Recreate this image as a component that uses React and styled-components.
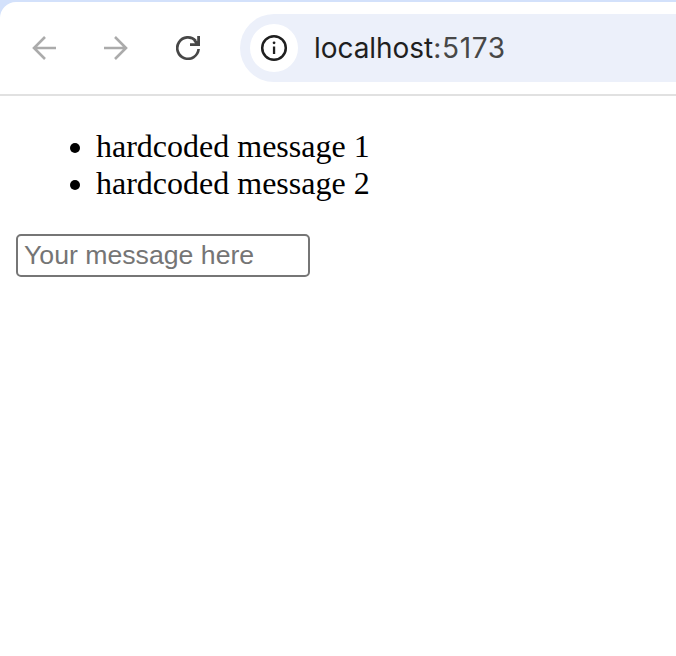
import React from 'react';
import styled, { createGlobalStyle } from 'styled-components';

const GlobalStyle = createGlobalStyle`
  * { box-sizing: border-box; }
  body { margin: 0; background: #fff; overflow: hidden; }
`;

const Window = styled.div`
  display: flex;
  flex-direction: column;
  height: 656px;
  padding-top: 2px;
  background: linear-gradient(#d3e1fb 0 40px, #fff 40px);
`;

const Toolbar = styled.header`
  display: flex;
  align-items: center;
  height: 94px;
  padding: 0 0 0 20px;
  background: #fff;
  border-bottom: 2px solid #e1e1e1;
  border-top-left-radius: 16px;
`;

const NavButton = styled.button`
  display: flex;
  align-items: center;
  justify-content: center;
  width: 48px;
  height: 48px;
  margin-right: 24px;
  padding: 0;
  border: 0;
  background: none;
  color: ${({ $muted }) => ($muted ? '#ababab' : '#474747')};
`;

const AddressBar = styled.div`
  display: flex;
  flex: 1;
  align-items: center;
  gap: 16px;
  height: 68px;
  margin-left: 4px;
  padding-left: 10px;
  border-radius: 34px 0 0 34px;
  background: #ecf0fa;
`;

const SiteInfo = styled.span`
  display: flex;
  align-items: center;
  justify-content: center;
  width: 48px;
  height: 48px;
  border-radius: 50%;
  background: #fff;
  color: #1f1f1f;
`;

const Url = styled.span`
  font: 400 28px/34px Inter, sans-serif;
  letter-spacing: -0.05px;
  color: #1f1f1f;
`;

const Port = styled.span`
  letter-spacing: 0.7px;
  color: #474747;
`;

const Page = styled.main`
  flex: 1;
  padding: 33px 16px 16px;
  background: #fff;
`;

const Messages = styled.ul`
  margin: 0 0 31px;
  padding: 0 0 0 54px;
  list-style: none;
`;

const Message = styled.li`
  display: flex;
  align-items: center;
  gap: 16px;
  height: 37px;
  font: 32px/35px 'Liberation Serif', serif;
  color: #000;

  &::before {
    content: '';
    width: 10px;
    height: 10px;
    border-radius: 50%;
    background: #000;
  }
`;

const MessageText = styled.span`
  height: 37px;
`;

const MessageInput = styled.input`
  display: block;
  width: 294px;
  height: 43px;
  padding: 3px 6px;
  border: 2px solid #767676;
  border-radius: 5px;
  outline: 0;
  background: #fff;
  font: 26.67px 'Liberation Sans', sans-serif;

  &::placeholder { color: #757575; opacity: 1; }
`;

const BackIcon = () => (
  <svg width="24" height="24" viewBox="0 0 24 24" fill="none" stroke="currentColor" strokeWidth="2.6">
    <path d="M24 12H2M13 1 2 12 13 23" />
  </svg>
);

const ForwardIcon = () => (
  <svg width="24" height="24" viewBox="0 0 24 24" fill="none" stroke="currentColor" strokeWidth="2.6">
    <path d="M0 12h22M11 1 22 12 11 23" />
  </svg>
);

const ReloadIcon = () => (
  <svg width="24" height="24" viewBox="0 0 24 24">
    <path d="M22.6 13A10.7 10.7 0 1 1 19.8 4.8" fill="none" stroke="currentColor" strokeWidth="2.7" />
    <path d="M24 0v10H14V7.2h5.2L17.5 5.4 19.4 3.5 21.2 5.2V0z" fill="currentColor" />
  </svg>
);

const InfoIcon = () => (
  <svg width="28" height="28" viewBox="0 0 28 28">
    <circle cx="14" cy="14" r="11.8" fill="none" stroke="currentColor" strokeWidth="2.5" />
    <path d="M12.9 12.5h2.3V20h-2.3z" fill="currentColor" />
    <circle cx="14.05" cy="8.8" r="1.4" fill="currentColor" />
  </svg>
);

const messages = ['hardcoded message 1', 'hardcoded message 2'];

export default function App() {
  return (
    <Window>
      <GlobalStyle />
      <Toolbar>
        <NavButton $muted aria-label="Back"><BackIcon /></NavButton>
        <NavButton $muted aria-label="Forward"><ForwardIcon /></NavButton>
        <NavButton aria-label="Reload"><ReloadIcon /></NavButton>
        <AddressBar>
          <SiteInfo><InfoIcon /></SiteInfo>
          <Url>localhost<Port>:5173</Port></Url>
        </AddressBar>
      </Toolbar>
      <Page>
        <Messages>
          {messages.map((text) => (
            <Message key={text}><MessageText>{text}</MessageText></Message>
          ))}
        </Messages>
        <MessageInput placeholder="Your message here" />
      </Page>
    </Window>
  );
}
